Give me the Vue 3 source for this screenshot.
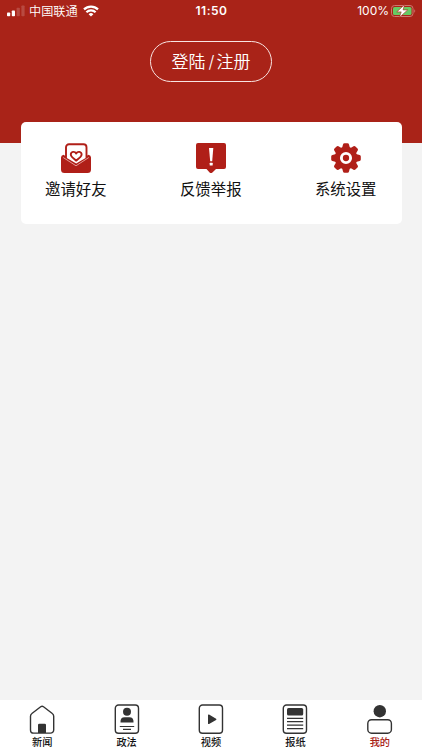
<script setup>
import { ref } from 'vue'

const menu = [
  { key: 'invite', label: '邀请好友' },
  { key: 'feedback', label: '反馈举报' },
  { key: 'settings', label: '系统设置' },
]

const tabs = [
  { key: 'news', label: '新闻' },
  { key: 'law', label: '政法' },
  { key: 'video', label: '视频' },
  { key: 'paper', label: '报纸' },
  { key: 'mine', label: '我的' },
]

const activeTab = ref('mine')
</script>

<template>
  <div class="page">
    <header class="header">
      <div class="status-bar">
        <div class="status-left">
          <svg class="signal" width="18" height="12" viewBox="0 0 18 12" fill="#fff">
            <rect x="0" y="7.5" width="3.2" height="3.8" rx="0.8" />
            <rect x="4.8" y="5.4" width="3.2" height="5.9" rx="0.8" />
            <rect x="9.6" y="2.8" width="3.2" height="8.5" rx="0.8" opacity="0.18" />
            <rect x="14.4" y="0.5" width="3.2" height="10.8" rx="0.8" opacity="0.18" />
          </svg>
          <span class="carrier">中国联通</span>
          <svg class="wifi" width="16" height="12" viewBox="0 0 16 12" fill="none" stroke="#fff" stroke-width="2.2">
            <path d="M1 4.4a10 10 0 0 1 14 0" />
            <path d="M3.4 7.2a6.5 6.5 0 0 1 9.2 0" />
            <path d="M5.6 9.2a3.5 3.5 0 0 1 4.8 0L8 11.6z" fill="#fff" stroke="none" />
          </svg>
        </div>
        <span class="time">11:50</span>
        <div class="status-right">
          <span class="percent">100%</span>
          <svg class="battery" width="25" height="14" viewBox="0 0 25 14">
            <rect x="0.5" y="1.5" width="21.5" height="11" rx="3" fill="none" stroke="#cf776f" />
            <rect x="2" y="3" width="18.5" height="8" rx="1.6" fill="#66cb63" />
            <path d="M23.3 5.2v3.6c1.2-.6 1.2-3 0-3.6z" fill="#cf776f" />
            <path d="M13.6 .6 5.8 7.9h4.4L8.4 13.4l8.3-7.5h-4.6z" fill="#fff" stroke="#a92318" stroke-width="0.6" />
          </svg>
        </div>
      </div>
      <button class="login">登陆<span class="slash">/</span>注册</button>
    </header>

    <section class="card">
      <div v-for="item in menu" :key="item.key" class="menu-item">
        <svg v-if="item.key === 'invite'" class="menu-icon" viewBox="0 0 30 30">
          <path d="M0 14.5Q0 12.2 2.5 11.7L15 20l12.5-8.3Q30 12.2 30 14.5V26.5a3.500 3.500 0 0 1-3.500 3.500h-23A3.500 3.500 0 0 1 0 26.500z" fill="#b01f18" />
          <path d="M5 15.700V4.200a3 3 0 0 1 3-3h14.500a3 3 0 0 1 3 3V15.700L15.200 21.500z" fill="#fff" stroke="#b01f18" stroke-width="1.9" />
          <path d="M15.2 17.600c-3.200-2.200-5.400-3.900-5.400-6 0-3.200 4-3.600 5.400-1.100 1.400-2.500 5.400-2.100 5.400 1.100 0 2.100-2.200 3.800-5.400 6z" fill="none" stroke="#b01f18" stroke-width="1.9" stroke-linejoin="round" />
          <path d="M4.400 16.600 15 22.800l10.600-6.200V25H4.400z" fill="#b01f18" />
          <path d="M2.200 14.500 15 22.800l12.800-8.300" fill="none" stroke="#f0b8b3" stroke-width="0.8" />
        </svg>
        <svg v-else-if="item.key === 'feedback'" class="menu-icon" viewBox="0 0 30 30">
          <path d="M2 0h26a2 2 0 0 1 2 2v22a2 2 0 0 1-2 2H20l-3.600 3.600q-1.400 1-2.800 0L10.500 26H2a2 2 0 0 1-2-2V2a2 2 0 0 1 2-2z" fill="#b01f18" />
          <path d="M13 5h4.300l-1.100 13.300h-2z" fill="#fff" />
          <rect x="13.700" y="19.800" width="3" height="2.700" rx="0.5" fill="#fff" />
        </svg>
        <svg v-else class="menu-icon" viewBox="0 0 30 30">
          <g fill="#b01f18">
            <circle cx="15" cy="15" r="11.3" />
            <path
              v-for="n in 8"
              :key="n"
              d="M10.8 6 12 1.400Q12.300 .2 13.500 .2h3q1.200 0 1.500 1.200L19.200 6z"
              :transform="`rotate(${n * 45} 15 15)`"
            />
          </g>
          <circle cx="15" cy="15" r="4.600" fill="none" stroke="#fff" stroke-width="2.9" />
        </svg>
        <span class="menu-label">{{ item.label }}</span>
      </div>
    </section>

    <nav class="tab-bar">
      <div
        v-for="tab in tabs"
        :key="tab.key"
        class="tab"
        :class="{ active: tab.key === activeTab }"
        @click="activeTab = tab.key"
      >
        <svg class="tab-icon" viewBox="0 0 30 30" fill="none" stroke="#333" stroke-width="1.4" stroke-linejoin="round">
          <template v-if="tab.key === 'news'">
            <path d="M3.500 12.200Q3.500 10.500 4.900 9.500L13.700 2.800q1.400-1 2.800 0l8.800 6.700q1.400 1 1.400 2.700V25.900a3.200 3.200 0 0 1-3.200 3.200H6.700a3.200 3.200 0 0 1-3.200-3.200z" />
            <path d="M11 29v-8q0-1.300 1.300-1.300h5.400q1.300 0 1.300 1.300v8z" fill="#333" stroke="none" />
          </template>
          <template v-else-if="tab.key === 'law'">
            <rect x="3.3" y="1" width="23.2" height="28.2" rx="3.2" />
            <g fill="#333" stroke="none">
              <circle cx="15" cy="7.700" r="4" />
              <path d="M8.500 18.500q-.4-5.200 4.200-5.200h4.600q4.600 0 4.200 5.200z" />
            </g>
            <path d="M7.800 22.500h14.400M11 25.400h8" stroke-width="1.2" />
          </template>
          <template v-else-if="tab.key === 'video'">
            <rect x="3.3" y="1" width="23.2" height="28.2" rx="3.2" />
            <path d="M12.700 11.200v8.200l7-4.100z" fill="#333" />
          </template>
          <template v-else-if="tab.key === 'paper'">
            <rect x="3.3" y="1" width="23.2" height="28.2" rx="3.2" />
            <rect x="7" y="4" width="16.2" height="7.500" rx="1.5" fill="#333" stroke="none" />
            <path d="M7 14.300h16.200M7 17.700h16.200M7 21.200h16.200M7 24.600h16.200" stroke-width="1.2" />
          </template>
          <template v-else>
            <circle cx="14.8" cy="7.2" r="6.2" fill="#333" stroke="none" />
            <rect x="2.8" y="15.7" width="23.6" height="13.5" rx="3.7" />
          </template>
        </svg>
        <span class="tab-label">{{ tab.label }}</span>
      </div>
    </nav>
  </div>
</template>

<style>
body {
  margin: 0;
}
</style>

<style scoped>
.page {
  display: flex;
  flex-direction: column;
  height: 100vh;
  background: #f3f3f3;
  font-family: 'Noto Sans CJK SC', sans-serif;
  overflow: hidden;
}

/* Header */
.header {
  display: flex;
  flex-direction: column;
  align-items: center;
  flex-shrink: 0;
  height: 142.5px;
  background: #a92318;
  color: #fff;
}

.status-bar {
  display: grid;
  grid-template-columns: 1fr auto 1fr;
  align-items: center;
  box-sizing: border-box;
  width: 100%;
  height: 21px;
  padding: 0 6px 0 7px;
}

.status-left,
.status-right {
  display: flex;
  align-items: center;
}

.status-right {
  justify-content: flex-end;
}

.carrier {
  margin: 0 5px 0 4px;
  font-size: 12.2px;
  font-weight: 350;
  line-height: 20px;
}

.time {
  font-family: Inter, sans-serif;
  font-size: 12px;
  font-weight: 600;
  letter-spacing: 0.5px;
}

.percent {
  margin-right: 2px;
  font-family: Inter, sans-serif;
  font-size: 12px;
}

.login {
  width: 122px;
  height: 41px;
  margin-top: 20px;
  padding: 0;
  border: 1px solid #f8e4e2;
  border-radius: 21px;
  background: transparent;
  color: #fff;
  font-family: inherit;
  font-size: 17px;
  font-weight: 350;
  line-height: 38px;
}

.slash {
  margin: 0 2px 0 3px;
  font-family: Inter, sans-serif;
}

/* Menu card */
.card {
  display: flex;
  justify-content: space-between;
  align-items: flex-start;
  box-sizing: border-box;
  flex-shrink: 0;
  height: 102px;
  margin: -20.5px 20.5px 0;
  padding: 21px 25px 0 24.5px;
  border-radius: 5px;
  background: #fff;
}

.menu-item {
  display: flex;
  flex-direction: column;
  align-items: center;
}

.menu-icon {
  width: 30px;
  height: 30px;
}

.menu-label {
  margin-top: 4px;
  font-size: 15.4px;
  line-height: 22px;
  color: #111;
}

/* Bottom tabs */
.tab-bar {
  display: flex;
  flex-shrink: 0;
  height: 50px;
  margin-top: auto;
  background: #fff;
}

.tab {
  display: flex;
  flex: 1;
  flex-direction: column;
  align-items: center;
  padding-top: 4px;
}

.tab-icon {
  width: 30px;
  height: 30px;
}

.tab-label {
  font-size: 10.2px;
  font-weight: 500;
  line-height: 16px;
  color: #111;
}

.tab.active .tab-label {
  color: #a92318;
}
</style>
